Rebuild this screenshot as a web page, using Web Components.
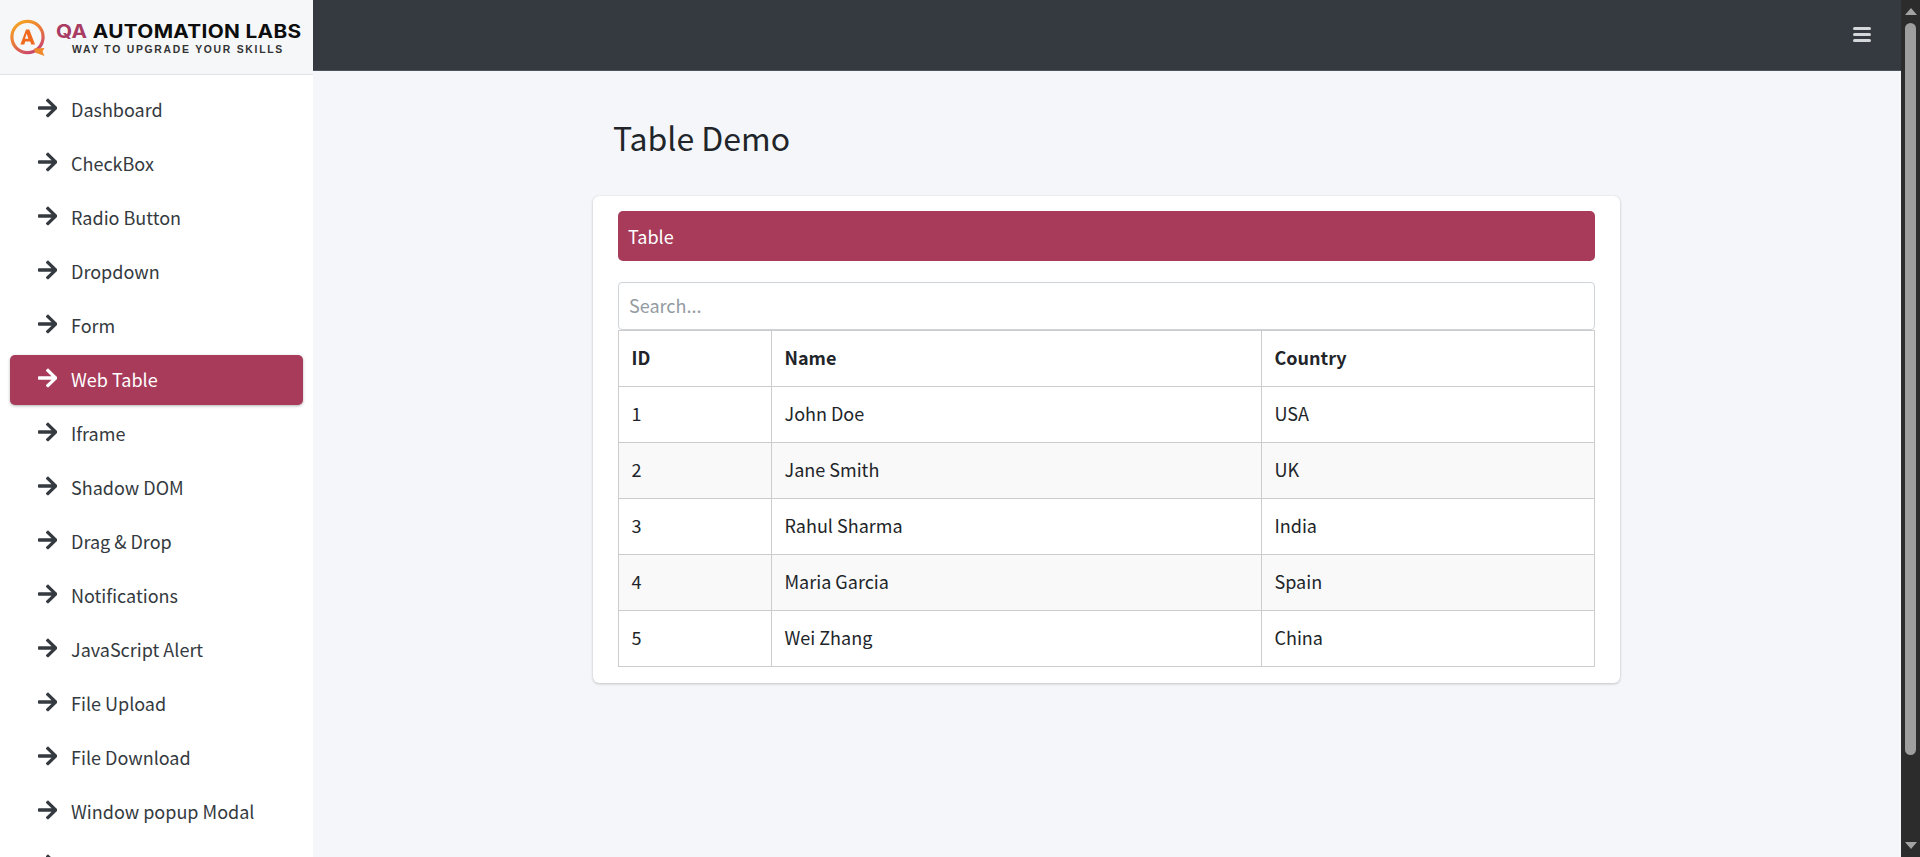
<!DOCTYPE html>
<html lang="en"><head><meta charset="utf-8"><title>Table Demo</title>
<style>
html,body{margin:0;padding:0;height:100%;overflow:hidden;background:#f4f6f9}
body{font-family:"Noto Sans CJK SC","Noto Sans",sans-serif;color:#212529}
</style></head>
<body>
<qa-app>
  <qa-sidebar slot="side">
    <qa-logo></qa-logo>
    <qa-nav-item>Dashboard</qa-nav-item>
    <qa-nav-item>CheckBox</qa-nav-item>
    <qa-nav-item>Radio Button</qa-nav-item>
    <qa-nav-item>Dropdown</qa-nav-item>
    <qa-nav-item>Form</qa-nav-item>
    <qa-nav-item active>Web Table</qa-nav-item>
    <qa-nav-item>Iframe</qa-nav-item>
    <qa-nav-item>Shadow DOM</qa-nav-item>
    <qa-nav-item>Drag &amp; Drop</qa-nav-item>
    <qa-nav-item>Notifications</qa-nav-item>
    <qa-nav-item>JavaScript Alert</qa-nav-item>
    <qa-nav-item>File Upload</qa-nav-item>
    <qa-nav-item>File Download</qa-nav-item>
    <qa-nav-item>Window popup Modal</qa-nav-item>
    <qa-nav-item></qa-nav-item>
  </qa-sidebar>
  <qa-topbar slot="top"></qa-topbar>
  <qa-content>
    <qa-card heading="Table"><qa-data-table></qa-data-table></qa-card>
  </qa-content>
  <qa-scrollbar slot="scroll"></qa-scrollbar>
</qa-app>
<script>
const def=(name,html)=>customElements.define(name,class extends HTMLElement{
  constructor(){super();this.attachShadow({mode:'open'}).innerHTML=typeof html==='function'?html(this):html;}
});
const ARROW='M190.5 66.9l22.2-22.2c9.4-9.4 24.6-9.4 33.9 0L441 239c9.4 9.4 9.4 24.6 0 33.9L246.6 467.3c-9.4 9.4-24.6 9.4-33.9 0l-22.2-22.2c-9.500-9.500-9.300-25 .4-34.300L311.4 296H24c-13.3 0-24-10.7-24-24v-32c0-13.3 10.700-24 24-24h287.4L190.9 101.200c-9.800-9.300-10-24.800-.4-34.300z';

def('qa-app',`<style>
:host{display:flex;height:100vh;overflow:hidden}
.col{flex:1;min-width:0;display:flex;flex-direction:column}
.rest{flex:1;min-height:0}
</style>
<slot name="side"></slot>
<div class="col"><slot name="top"></slot><div class="rest"><slot></slot></div></div>
<slot name="scroll"></slot>`);

def('qa-sidebar',`<style>
:host{display:block;flex:0 0 313px;width:313px;height:100vh;overflow:hidden;background:#fff;color:#343a40}
</style><slot></slot>`);

def('qa-logo',`<style>
:host{display:flex;align-items:center;box-sizing:border-box;height:75px;background:#f6f7f9;border-bottom:1px solid #e1e3e6;padding:0 0 0 10px;margin-bottom:10px}
svg{flex:none;width:37px;height:38px;margin-right:9px;margin-top:1px}
.t{display:flex;flex-direction:column;align-items:flex-start;margin-top:2px}
.a{font:700 18.4px/20px Inter,sans-serif;color:#0d0d0d;white-space:nowrap;letter-spacing:.3px;transform:scaleX(1.13);transform-origin:0 50%}
.a b{color:#a83c62;font-weight:700}
.b{font:700 10.4px/12px "Liberation Sans",sans-serif;color:#333;letter-spacing:1.73px;white-space:nowrap;margin:3px 0 0 16px}
</style>
<svg viewBox="0 0 37 38"><defs><linearGradient id="g" x1=".15" y1="0" x2=".7" y2="1"><stop offset="0" stop-color="#f5a623"/><stop offset=".5" stop-color="#ea7a3c"/><stop offset="1" stop-color="#c8466e"/></linearGradient></defs>
<circle cx="17.500" cy="18" r="15.600" fill="none" stroke="url(#g)" stroke-width="3.200"/>
<path d="M24 29.500l10.500-.5-2 3.500 2 4.500-9.500-3.500z" fill="#ee8a2c"/>
<path d="M10.400 25.500 16 10.500h3.300l5.700 15h-3.800l-.9-3h-5.100l-.9 3zM15 19.800h3.400l-1.700-5.400z" fill="#ef6a1f"/></svg>
<div class="t"><div class="a"><b>QA</b> AUTOMATION LABS</div><div class="b">WAY TO UPGRADE YOUR SKILLS</div></div>`);

def('qa-nav-item',el=>`<style>
:host{display:flex;align-items:center;box-sizing:border-box;height:50px;margin:0 10px 4px;padding:0 0 2px 27.500px;border-radius:5px;font-size:18px;color:#343a40;white-space:nowrap}
:host([active]){background:#a83b5a;color:#fff;box-shadow:0 1px 3px rgba(0,0,0,.3)}
svg{flex:none;width:19.500px;height:22px;margin-right:14px;margin-top:-2px;fill:currentColor}
</style><svg viewBox="0 0 448 512" preserveAspectRatio="none"><path d="${ARROW}"/></svg><slot></slot>`);

def('qa-topbar',`<style>
:host{display:flex;justify-content:flex-end;align-items:center;box-sizing:border-box;height:71px;background:#343a40;border-bottom:1px solid #4b545c;padding-right:30px}
.b{display:flex;flex-direction:column;gap:3px;width:18px;margin-top:-1px}
i{display:block;height:3.200px;border-radius:2px;background:#d5d8da}
</style><div class="b"><i></i><i></i><i></i></div>`);

def('qa-content',`<style>
:host{display:block;width:1027px;margin-left:280px}
h1{font-weight:400;font-size:32px;line-height:44px;margin:0;padding:44px 0 37px 20px;color:#212529}
</style><h1>Table Demo</h1><slot></slot>`);

def('qa-card',el=>`<style>
:host{display:block;box-sizing:border-box;background:#fff;border-radius:6px;box-shadow:0 0 1px rgba(0,0,0,.125),0 1px 3px rgba(0,0,0,.2);padding:15px 25px 16px 25px}
.h{box-sizing:border-box;height:50px;line-height:50px;background:#a83b5a;color:#fff;border-radius:5px;padding-left:10px;font-size:18px;margin-bottom:21px}
</style><div class="h">${el.getAttribute('heading')}</div><slot></slot>`);

def('qa-data-table',()=>{
 const rows=[[1,'John Doe','USA'],[2,'Jane Smith','UK'],[3,'Rahul Sharma','India'],[4,'Maria Garcia','Spain'],[5,'Wei Zhang','China']];
 return `<style>
:host{display:block;font-size:18px;color:#212529}
input{display:block;box-sizing:border-box;width:100%;height:48px;border:1px solid #ced4da;border-radius:4px;padding:0 10px 2px;font:inherit;color:#495057;background:#fff;outline:none}
input::placeholder{color:#939ba2;opacity:1}
table{width:100%;border-collapse:collapse;table-layout:fixed;box-sizing:border-box}
th,td{border:1px solid #cccccc;padding:13px 12px 15px 12.500px;height:27px;line-height:27px;text-align:left;font-weight:400;box-sizing:content-box}
th{font-weight:700}
tr:nth-child(even) td{background:#f9f9f9}
</style><input type="text" placeholder="Search...">
<table><colgroup><col style="width:153px"><col style="width:490px"><col></colgroup>
<thead><tr><th>ID</th><th>Name</th><th>Country</th></tr></thead>
<tbody>${rows.map(r=>`<tr><td>${r[0]}</td><td>${r[1]}</td><td>${r[2]}</td></tr>`).join('')}</tbody></table>`;
});

def('qa-scrollbar',`<style>
:host{display:flex;flex-direction:column;flex:0 0 19px;width:19px;height:100vh;background:#2c2c2c;box-sizing:border-box;align-items:center}
.up,.dn{flex:none;width:0;height:0;border-left:6.500px solid transparent;border-right:6.500px solid transparent}
.up{border-bottom:7px solid #a3a3a3;margin-top:8px}
.dn{border-top:7px solid #a3a3a3;margin-bottom:8px}
.th{flex:none;width:11px;height:732px;margin-top:8px;border-radius:6px;background:#9e9e9e}
.sp{flex:1}
</style><div class="up"></div><div class="th"></div><div class="sp"></div><div class="dn"></div>`);
</script>
</body></html>
